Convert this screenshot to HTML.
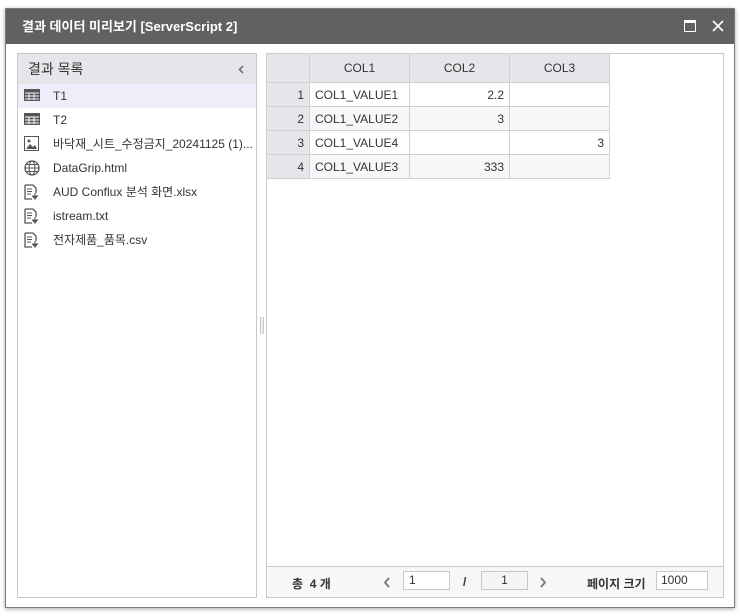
<!DOCTYPE html>
<html><head><meta charset="utf-8"><style>
*{box-sizing:border-box;margin:0;padding:0}
body{width:740px;height:616px;background:#fff;font-family:"Liberation Sans","Noto Sans CJK KR",sans-serif;position:relative;overflow:hidden;font-size:12px;color:#333}
.dlg{position:absolute;left:5px;top:8px;width:730px;height:600px;background:#fff;border:1px solid #7a7a7a;box-shadow:0 1px 4px rgba(0,0,0,.35)}
.tb{position:absolute;left:0;top:0;right:0;height:35px;background:#616161;color:#fff;font-weight:bold;font-size:13px;line-height:35px;padding-left:16px}
.lp{position:absolute;left:11px;top:44px;width:240px;height:545px;border:1px solid #c8c8c8}
.lh{height:30px;background:#e6e6ea;line-height:30px;padding-left:10px;font-size:14px;color:#333;position:relative}
.row{height:24px;line-height:24px;padding-left:35px;position:relative;font-size:12px;white-space:nowrap;overflow:hidden}
.row svg{position:absolute;left:6px;top:4px}
.rp{position:absolute;left:260px;top:44px;width:458px;height:545px;border:1px solid #c8c8c8}
table{border-collapse:collapse;position:absolute;left:-1px;top:-1px}
td{border:1px solid #d0d0d4;height:24px;font-size:12px;padding:0 5px}
th{border:1px solid #d0d0d4;height:29px;background:#e6e6ea;font-weight:normal;font-size:12px}
td.n{background:#e6e6ea;text-align:right}
td.r{text-align:right}
tr.alt td{background:#f7f7f9}tr.alt td.n{background:#e6e6ea}
.ft{position:absolute;left:0;bottom:0;width:456px;height:31px;border-top:1px solid #c8c8c8;background:#f7f7f9;font-size:12px}
.ft span{position:absolute;top:8px}
.in{position:absolute;top:4px;height:19px;border:1px solid #c8c8c8;background:#fff;font-size:12px;line-height:17px;padding-left:5px}
</style></head><body>
<div class="dlg">
<div class="tb">결과 데이터 미리보기 [ServerScript 2]
<svg style="position:absolute;left:678px;top:11px" width="12" height="12"><rect x="0.5" y="0.5" width="11" height="11" fill="none" stroke="#fff"/><rect x="0" y="0" width="12" height="3" fill="#fff"/></svg>
<svg style="position:absolute;left:706px;top:11px" width="12" height="12"><path d="M1 1L11 11M11 1L1 11" stroke="#fff" stroke-width="1.6"/></svg>
</div>
<div class="lp">
<div class="lh">결과 목록<svg style="position:absolute;right:12px;top:11px" width="6" height="9"><path d="M5 1L1.5 4.5L5 8" fill="none" stroke="#666" stroke-width="1.5"/></svg></div>
<div class="row" style="background:#eeeefa"><svg width="16" height="14"><rect x="0" y="1" width="16" height="12" fill="#555"/><path d="M1 5h14M1 8h14M1 11h14M5 5v7M10 5v7" stroke="#eeeefa" stroke-width="1"/></svg>T1</div>
<div class="row"><svg width="16" height="14"><rect x="0" y="1" width="16" height="12" fill="#555"/><path d="M1 5h14M1 8h14M1 11h14M5 5v7M10 5v7" stroke="#fff" stroke-width="1"/></svg>T2</div>
<div class="row"><svg width="16" height="16"><rect x="0.5" y="0.5" width="14" height="14" fill="none" stroke="#555"/><path d="M2 13L6 8L9 11L11 9L13 13Z" fill="#555"/><circle cx="5" cy="5" r="1.5" fill="#555"/></svg>바닥재_시트_수정금지_20241125 (1)...</div>
<div class="row"><svg width="16" height="16"><circle cx="8" cy="8" r="7" fill="none" stroke="#555" stroke-width="1.3"/><ellipse cx="8" cy="8" rx="3" ry="7" fill="none" stroke="#555"/><path d="M1 8h14M2 4.5h12M2 11.5h12" stroke="#555"/></svg>DataGrip.html</div>
<div class="row"><svg width="16" height="16"><path d="M1 1h8l3 3v5M1 1v14h7" fill="none" stroke="#555" stroke-width="1.3"/><path d="M3 5h5M3 7.5h5M3 10h4" stroke="#555"/><path d="M11 9v4M8.5 12l2.5 3l2.5-3z" stroke="#555" fill="#555"/></svg>AUD Conflux 분석 화면.xlsx</div>
<div class="row"><svg width="16" height="16"><path d="M1 1h8l3 3v5M1 1v14h7" fill="none" stroke="#555" stroke-width="1.3"/><path d="M3 5h5M3 7.5h5M3 10h4" stroke="#555"/><path d="M11 9v4M8.5 12l2.5 3l2.5-3z" stroke="#555" fill="#555"/></svg>istream.txt</div>
<div class="row"><svg width="16" height="16"><path d="M1 1h8l3 3v5M1 1v14h7" fill="none" stroke="#555" stroke-width="1.3"/><path d="M3 5h5M3 7.5h5M3 10h4" stroke="#555"/><path d="M11 9v4M8.5 12l2.5 3l2.5-3z" stroke="#555" fill="#555"/></svg>전자제품_품목.csv</div>
</div>
<div style="position:absolute;left:254px;top:308px;width:4px;height:17px;border-left:1px solid #c8c8c8;border-right:1px solid #c8c8c8;background:#eee"></div>
<div class="rp">
<table>
<tr><th style="width:43px"></th><th style="width:100px">COL1</th><th style="width:100px">COL2</th><th style="width:100px">COL3</th></tr>
<tr><td class="n">1</td><td>COL1_VALUE1</td><td class="r">2.2</td><td></td></tr>
<tr class="alt"><td class="n">2</td><td>COL1_VALUE2</td><td class="r">3</td><td></td></tr>
<tr><td class="n">3</td><td>COL1_VALUE4</td><td></td><td class="r">3</td></tr>
<tr class="alt"><td class="n">4</td><td>COL1_VALUE3</td><td class="r">333</td><td></td></tr>
</table>
<div class="ft">
<span style="left:25px;font-weight:bold">총&nbsp;&nbsp;4 개</span>
<svg style="position:absolute;left:116px;top:10px" width="8" height="11"><path d="M6 1L2 5.5L6 10" fill="none" stroke="#777" stroke-width="1.8"/></svg>
<div class="in" style="left:136px;width:47px">1</div>
<span style="left:196px;font-weight:bold">/</span>
<div class="in" style="left:214px;width:47px;background:#f4f4f4;text-align:center;padding:0">1</div>
<svg style="position:absolute;left:272px;top:10px" width="8" height="11"><path d="M2 1L6 5.5L2 10" fill="none" stroke="#777" stroke-width="1.8"/></svg>
<span style="left:320px;font-weight:bold">페이지 크기</span>
<div class="in" style="left:389px;width:52px;padding-left:4px">1000</div>
</div>
</div>
</div>
</body></html>
